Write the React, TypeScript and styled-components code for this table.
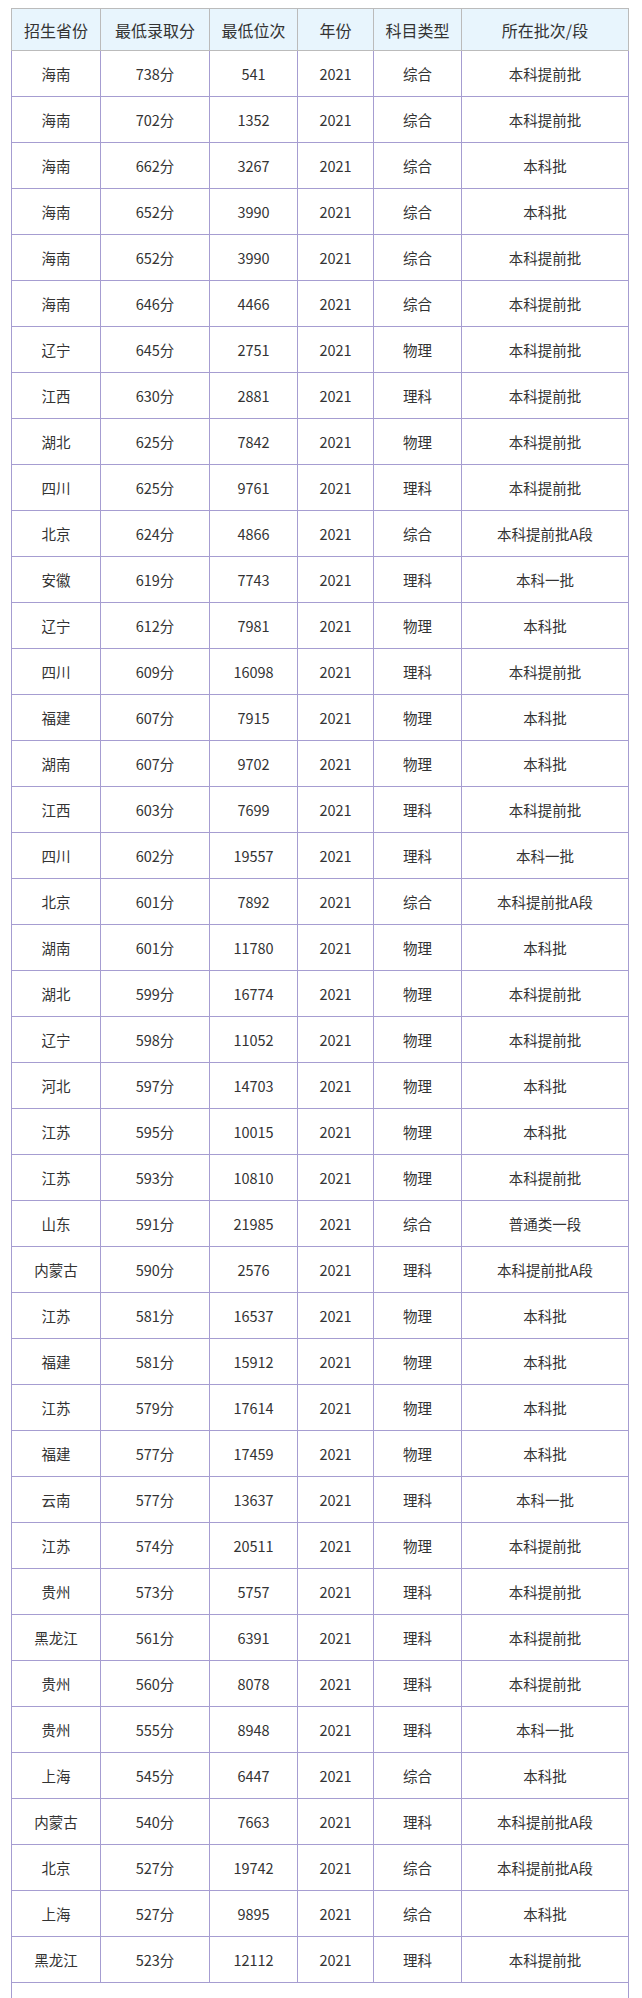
import styled, { createGlobalStyle } from "styled-components";

type Row = [string, string, string, string, string, string];

const columns = ["招生省份", "最低录取分", "最低位次", "年份", "科目类型", "所在批次/段"];
const widths = [89, 109, 88, 76, 88, 167];

const rows: Row[] = [
  ["海南", "738分", "541", "2021", "综合", "本科提前批"],
  ["海南", "702分", "1352", "2021", "综合", "本科提前批"],
  ["海南", "662分", "3267", "2021", "综合", "本科批"],
  ["海南", "652分", "3990", "2021", "综合", "本科批"],
  ["海南", "652分", "3990", "2021", "综合", "本科提前批"],
  ["海南", "646分", "4466", "2021", "综合", "本科提前批"],
  ["辽宁", "645分", "2751", "2021", "物理", "本科提前批"],
  ["江西", "630分", "2881", "2021", "理科", "本科提前批"],
  ["湖北", "625分", "7842", "2021", "物理", "本科提前批"],
  ["四川", "625分", "9761", "2021", "理科", "本科提前批"],
  ["北京", "624分", "4866", "2021", "综合", "本科提前批A段"],
  ["安徽", "619分", "7743", "2021", "理科", "本科一批"],
  ["辽宁", "612分", "7981", "2021", "物理", "本科批"],
  ["四川", "609分", "16098", "2021", "理科", "本科提前批"],
  ["福建", "607分", "7915", "2021", "物理", "本科批"],
  ["湖南", "607分", "9702", "2021", "物理", "本科批"],
  ["江西", "603分", "7699", "2021", "理科", "本科提前批"],
  ["四川", "602分", "19557", "2021", "理科", "本科一批"],
  ["北京", "601分", "7892", "2021", "综合", "本科提前批A段"],
  ["湖南", "601分", "11780", "2021", "物理", "本科批"],
  ["湖北", "599分", "16774", "2021", "物理", "本科提前批"],
  ["辽宁", "598分", "11052", "2021", "物理", "本科提前批"],
  ["河北", "597分", "14703", "2021", "物理", "本科批"],
  ["江苏", "595分", "10015", "2021", "物理", "本科批"],
  ["江苏", "593分", "10810", "2021", "物理", "本科提前批"],
  ["山东", "591分", "21985", "2021", "综合", "普通类一段"],
  ["内蒙古", "590分", "2576", "2021", "理科", "本科提前批A段"],
  ["江苏", "581分", "16537", "2021", "物理", "本科批"],
  ["福建", "581分", "15912", "2021", "物理", "本科批"],
  ["江苏", "579分", "17614", "2021", "物理", "本科批"],
  ["福建", "577分", "17459", "2021", "物理", "本科批"],
  ["云南", "577分", "13637", "2021", "理科", "本科一批"],
  ["江苏", "574分", "20511", "2021", "物理", "本科提前批"],
  ["贵州", "573分", "5757", "2021", "理科", "本科提前批"],
  ["黑龙江", "561分", "6391", "2021", "理科", "本科提前批"],
  ["贵州", "560分", "8078", "2021", "理科", "本科提前批"],
  ["贵州", "555分", "8948", "2021", "理科", "本科一批"],
  ["上海", "545分", "6447", "2021", "综合", "本科批"],
  ["内蒙古", "540分", "7663", "2021", "理科", "本科提前批A段"],
  ["北京", "527分", "19742", "2021", "综合", "本科提前批A段"],
  ["上海", "527分", "9895", "2021", "综合", "本科批"],
  ["黑龙江", "523分", "12112", "2021", "理科", "本科提前批"],
];

const GlobalStyle = createGlobalStyle`
  body {
    margin: 0;
    background: #ffffff;
    font-family: "Noto Sans CJK SC", "Noto Sans", sans-serif;
  }
`;

const Page = styled.div`
  padding: 8px 0 0 11px;
  height: 1990px;
  overflow: hidden;
`;

const Table = styled.table`
  border-collapse: collapse;
  table-layout: fixed;
  width: 618px;
  color: #333333;
`;

const HeadCell = styled.th`
  height: 41px;
  padding: 0;
  border: 1px solid #bbbbbb;
  background: #e8f5fd;
  font-size: 16px;
  font-weight: normal;
  text-align: center;
`;

const Cell = styled.td`
  height: 45px;
  padding: 0;
  border: 1px solid #a69dd1;
  font-size: 14.5px;
  text-align: center;
`;

const FillerCell = styled(Cell)`
  height: 30px;
`;

const App = () => (
  <>
    <GlobalStyle />
    <Page>
      <Table>
        <colgroup>
          {widths.map((w, i) => (
            <col key={i} style={{ width: w }} />
          ))}
        </colgroup>
        <thead>
          <tr>
            {columns.map((c) => (
              <HeadCell key={c}>{c}</HeadCell>
            ))}
          </tr>
        </thead>
        <tbody>
          {rows.map((r, i) => (
            <tr key={i}>
              {r.map((v, j) => (
                <Cell key={j}>{v}</Cell>
              ))}
            </tr>
          ))}
          <tr>
            <FillerCell colSpan={6} />
          </tr>
        </tbody>
      </Table>
    </Page>
  </>
);

export default App;
